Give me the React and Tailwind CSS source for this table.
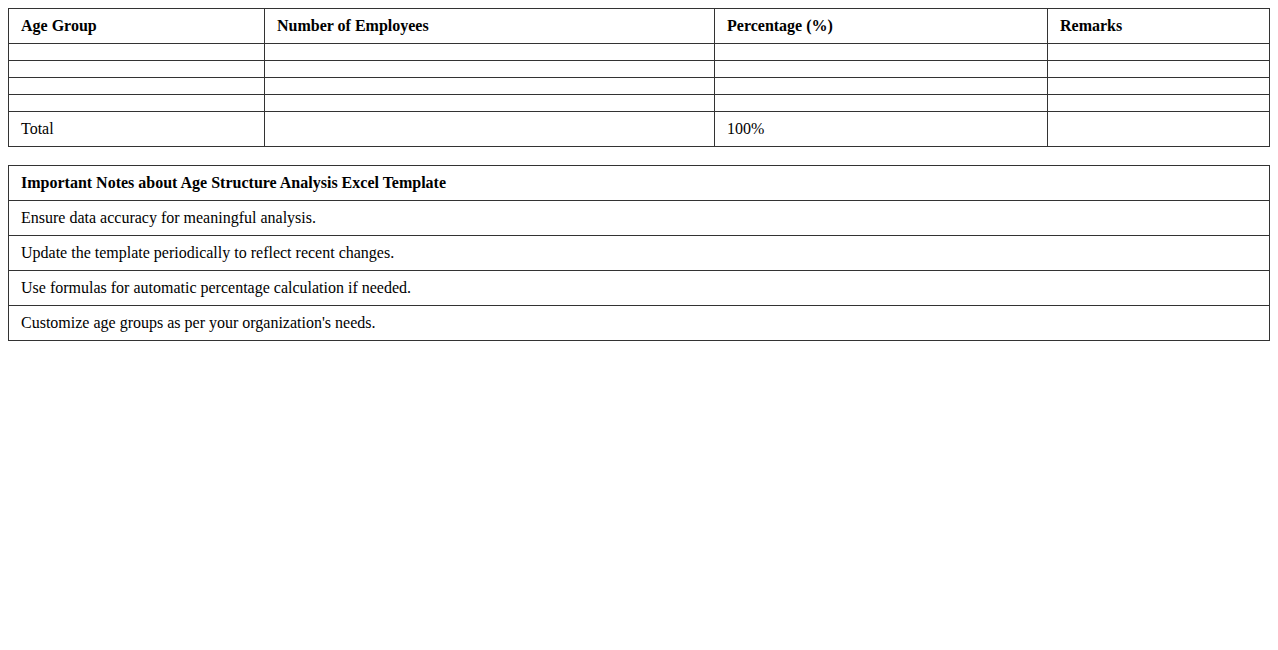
export default function App() {
  const cell = "border border-[#333] px-3 py-2 text-left align-middle"
  const notes = [
    "Ensure data accuracy for meaningful analysis.",
    "Update the template periodically to reflect recent changes.",
    "Use formulas for automatic percentage calculation if needed.",
    "Customize age groups as per your organization's needs.",
  ]

  return (
    <div className="p-2 bg-white text-black text-[16px] leading-[18px] font-['Liberation_Serif','Times_New_Roman',serif]">
      <table className="w-full border-collapse table-fixed mb-[18px]">
        <thead>
          <tr>
            <th className={`${cell} w-[256px] font-bold`}>Age Group</th>
            <th className={`${cell} w-[450px] font-bold`}>Number of Employees</th>
            <th className={`${cell} w-[333px] font-bold`}>Percentage (%)</th>
            <th className={`${cell} font-bold`}>Remarks</th>
          </tr>
        </thead>
        <tbody>
          {[0, 1, 2, 3].map((i) => (
            <tr key={i}>
              <td className={cell}></td>
              <td className={cell}></td>
              <td className={cell}></td>
              <td className={cell}></td>
            </tr>
          ))}
          <tr>
            <td className={cell}>Total</td>
            <td className={cell}></td>
            <td className={cell}>100%</td>
            <td className={cell}></td>
          </tr>
        </tbody>
      </table>

      <table className="w-full border-collapse">
        <thead>
          <tr>
            <th className={`${cell} font-bold`}>Important Notes about Age Structure Analysis Excel Template</th>
          </tr>
        </thead>
        <tbody>
          {notes.map((n) => (
            <tr key={n}>
              <td className={cell}>{n}</td>
            </tr>
          ))}
        </tbody>
      </table>
    </div>
  )
}
